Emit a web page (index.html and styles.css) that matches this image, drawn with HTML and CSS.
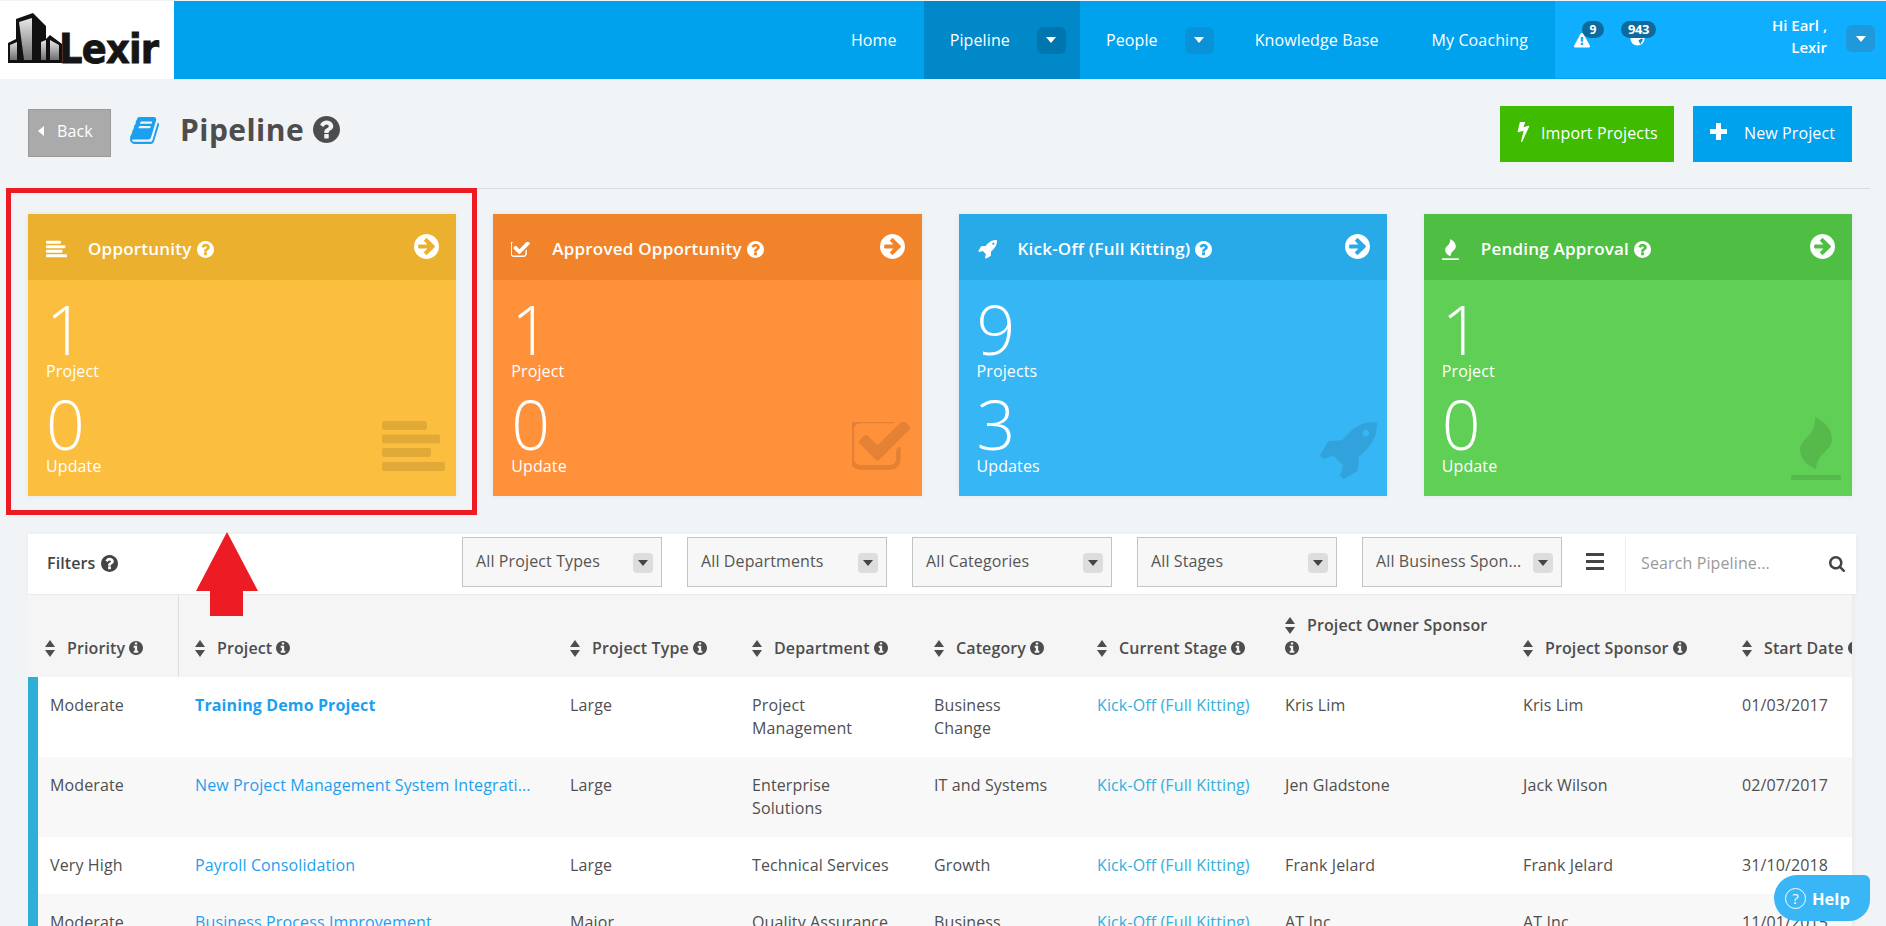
FILE: index.html
```html
<!DOCTYPE html>
<html lang="en">
<head>
<meta charset="utf-8">
<title>Pipeline</title>
<link rel="stylesheet" href="styles.css">
</head>
<body>
<svg class="defs" aria-hidden="true">
  <symbol id="q" viewBox="128 128 1536 1536"><path d="M1024 1376v-192q0-14-9-23t-23-9h-192q-14 0-23 9t-9 23v192q0 14 9 23t23 9h192q14 0 23-9t9-23zm256-672q0-88-55.5-163t-138.5-116-170-41q-243 0-371 213-15 24 8 42l132 100q7 6 19 6 16 0 25-12 53-68 86-92 34-24 86-24 48 0 85.5 26t37.5 59q0 38-20 61t-68 45q-63 28-115.5 86.5t-52.5 125.5v36q0 14 9 23t23 9h192q14 0 23-9t9-23q0-19 21.500-49.500t54.500-49.500q32-18 49-28.500t46-35 44.500-48 28-60.500 12.500-81zm384 192q0 209-103 385.500t-279.500 279.500-385.500 103-385.500-103-279.500-279.500-103-385.500 103-385.500 279.500-279.500 385.500-103 385.500 103 279.500 279.500 103 385.500z"/></symbol>
  <symbol id="info" viewBox="128 128 1536 1536"><path d="M1152 1376v-160q0-14-9-23t-23-9h-96v-512q0-14-9-23t-23-9h-320q-14 0-23 9t-9 23v160q0 14 9 23t23 9h96v320h-96q-14 0-23 9t-9 23v160q0 14 9 23t23 9h448q14 0 23-9t9-23zm-128-896v-160q0-14-9-23t-23-9h-192q-14 0-23 9t-9 23v160q0 14 9 23t23 9h192q14 0 23-9t9-23zm640 416q0 209-103 385.500t-279.500 279.500-385.500 103-385.500-103-279.500-279.500-103-385.500 103-385.500 279.500-279.500 385.500-103 385.500 103 279.500 279.500 103 385.500z"/></symbol>
  <symbol id="go" viewBox="128 128 1536 1536"><path d="M1413 896q0-27-18-45l-91-91-362-362q-18-18-45-18t-45 18l-91 91q-18 18-18 45t18 45l189 189h-502q-26 0-45 19t-19 45v128q0 26 19 45t45 19h502l-189 189q-19 19-19 45t19 45l91 91q18 18 45 18t45-18l362-362 91-91q18-18 18-45zm251 0q0 209-103 385.500t-279.500 279.500-385.500 103-385.500-103-279.500-279.500-103-385.500 103-385.500 279.500-279.500 385.500-103 385.500 103 279.500 279.500 103 385.500z"/></symbol>
  <symbol id="check" viewBox="128 256 1600 1280"><path d="M1472 930v318q0 119-84.500 203.500t-203.500 84.500h-832q-119 0-203.500-84.500t-84.500-203.500v-832q0-119 84.500-203.500t203.500-84.500h832q63 0 117 25 15 7 18 23 3 17-9 29l-49 49q-10 10-23 10-3 0-9-2-23-6-45-6h-832q-66 0-113 47t-47 113v832q0 66 47 113t113 47h832q66 0 113-47t47-113v-254q0-13 9-22l64-64q10-10 23-10 6 0 12 3 20 8 20 29zm231-489l-814 814q-24 24-57 24t-57-24l-430-430q-24-24-24-57t24-57l110-110q24-24 57-24t57 24l263 263 647-647q24-24 57-24t57 24l110 110q24 24 24 57t-24 57z"/></symbol>
  <symbol id="rocket" viewBox="64 128 1664 1664"><path d="M1504 448q0-40-28-68t-68-28-68 28-28 68 28 68 68 28 68-28 28-68zm224-288q0 249-75.500 430.500t-253.500 360.500q-81 80-195 176l-20 379q-2 16-16 26l-384 224q-7 4-16 4-12 0-23-9l-64-64q-13-14-8-32l85-276-281-281-276 85q-3 1-9 1-14 0-23-9l-64-64q-17-19-5-39l224-384q10-14 26-16l379-20q96-114 176-195 188-187 358-258t431-71q14 0 24 9.500t10 22.500z"/></symbol>
  <symbol id="fire" viewBox="0 0 50 63"><path d="M24 0C34 5 41 12 41 22 41 34 26 36 25 52 14 48 9 40 9 32 9 22 26 18 24 0Z"/><rect y="58" width="50" height="5"/></symbol>
  <symbol id="bars" viewBox="0 0 63 50"><rect width="45" height="9" rx="2"/><rect y="13.500" width="58" height="9" rx="2"/><rect y="27" width="49" height="9" rx="2"/><rect y="41" width="63" height="9" rx="2"/></symbol>
  <symbol id="bolt" viewBox="450 256 900 1536"><path d="M1333 566q18 20 7 44l-540 1157q-13 25-42 25-4 0-14-2-17-5-25.500-19t-4.500-30l197-808-406 101q-4 1-12 1-18 0-31-11-18-15-13-39l201-825q4-14 16-23t28-9h328q19 0 32 12.500t13 29.500q0 8-5 18l-171 463 396-98q8-2 12-2 19 0 34 15z"/></symbol>
  <symbol id="book" viewBox="64 128 1664 1536"><path d="M1703 478q40 57 18 129l-275 906q-19 64-76.500 107.500t-122.500 43.500h-923q-77 0-148.500-53.500t-99.500-131.500q-24-67-2-127 0-4 3-27t4-37q1-8-3-21.500t-3-19.500q2-11 8-21t16.500-23.500 16.500-23.500q23-38 45-91.500t30-91.500q3-10 .5-30t-.5-28q3-11 17-28t17-23q21-36 42-92t25-90q1-9-2.500-32t.5-28q4-13 22-30.500t22-22.500q19-26 42.500-84.500t27.500-96.500q1-8-3-25.500t-2-26.500q2-8 9-18t18-23 17-21q8-12 16.500-30.500t15-35 16-36 19.500-32 26.500-23.500 36-11.500 47.500 5.500l-1 3q38-9 51-9h761q74 0 114 56t18 130l-274 906q-36 119-71.500 153.500t-128.500 34.500h-869q-27 0-38 15-11 16-1 43 24 70 144 70h923q29 0 56-15.500t35-41.500l300-987q7-22 5-57 38 15 59 43zm-1064 2q-4 13 2 22.500t20 9.500h608q13 0 25.500-9.500t16.500-22.500l21-64q4-13-2-22.500t-20-9.500h-608q-13 0-25.500 9.500t-16.500 22.500zm-83 256q-4 13 2 22.500t20 9.500h608q13 0 25.500-9.500t16.500-22.500l21-64q4-13-2-22.500t-20-9.500h-608q-13 0-25.500 9.500t-16.500 22.500z"/></symbol>
  <symbol id="warn" viewBox="0 64 1792 1664"><path d="M1024 1375v-190q0-14-9.500-23.500t-22.500-9.500h-192q-13 0-22.500 9.500t-9.500 23.500v190q0 14 9.500 23.500t22.500 9.500h192q13 0 22.500-9.500t9.500-23.500zm-2-374l18-459q0-12-10-19-13-11-24-11h-220q-11 0-24 11-10 7-10 21l17 457q0 10 10 16.500t24 6.500h185q14 0 23.500-6.500t10.500-16.500zm-14-934l768 1408q35 63-2 126-17 29-46.500 46t-63.500 17h-1536q-34 0-63.500-17t-46.500-46q-37-63-2-126l768-1408q17-31 47-49t65-18 65 18 47 49z"/></symbol>
  <symbol id="search" viewBox="64 128 1664 1664"><path d="M1216 832q0-185-131.500-316.500t-316.500-131.500-316.500 131.500-131.500 316.500 131.500 316.500 316.500 131.500 316.500-131.500 131.500-316.500zm512 832q0 52-38 90t-90 38q-54 0-90-38l-343-342q-179 124-399 124-143 0-273.500-55.500t-225-150-150-225-55.500-273.500 55.500-273.500 150-225 225-150 273.500-55.500 273.500 55.500 225 150 150 225 55.500 273.500q0 220-124 399l343 343q37 37 37 90z"/></symbol>
  <symbol id="sort" viewBox="0 0 10 17"><path d="M5 0l5 7H0zM5 17L0 10h10z"/></symbol>
</svg>

<nav class="topnav">
  <a class="logo">
    <svg class="logo-mark" viewBox="0 0 54 50">
      <defs><linearGradient id="glass" x1="0" y1="0" x2="0" y2="1"><stop offset="0" stop-color="#e8e8e8"/><stop offset="1" stop-color="#6f6f6f"/></linearGradient></defs>
      <path d="M0 30L8 26V6L25 0 38 13V26L42 22 54 31V50H0Z" fill="#111"/>
      <path d="M11 9L24 5V47H16Z" fill="url(#glass)"/>
      <path d="M2 32L9 29V47H2ZM33 29L38 27V47H33ZM42 27L51 32V47H42Z" fill="url(#glass)"/>
    </svg>
    <span class="logo-word">Lexir</span>
  </a>
  <div class="nav-main">
    <a class="nav-item">Home</a>
    <a class="nav-item active">Pipeline<span class="drop"></span></a>
    <a class="nav-item">People<span class="drop"></span></a>
    <a class="nav-item">Knowledge Base</a>
    <a class="nav-item">My Coaching</a>
  </div>
  <div class="nav-user">
    <span class="alert alert-warn"><svg class="alert-icon"><use href="#warn"/></svg><b class="badge">9</b></span>
    <span class="alert alert-globe">
      <svg class="alert-icon" viewBox="0 0 16 16"><circle cx="8" cy="8" r="7.500" fill="#fff"/><path d="M3 3l5-1 3 2-2 3-3-1zM9 10l3-2 2 1-3 5z" fill="#0e8fd0"/></svg>
      <b class="badge">943</b>
    </span>
    <span class="hello">Hi Earl ,<br>Lexir</span>
    <span class="drop user-drop"></span>
  </div>
</nav>

<header class="page-head">
  <div class="head-left">
    <a class="back"><i class="back-tri"></i>Back</a>
    <svg class="book"><use href="#book"/></svg>
    <h1>Pipeline</h1>
    <svg class="title-help"><use href="#q"/></svg>
  </div>
  <div class="head-right">
    <a class="btn btn-green"><svg class="btn-bolt"><use href="#bolt"/></svg>Import Projects</a>
    <a class="btn btn-blue"><i class="btn-plus"></i>New Project</a>
  </div>
</header>

<section class="cards">
  <article class="card yellow">
    <div class="card-head">
      <svg class="ci"><use href="#bars"/></svg>
      <h2>Opportunity</h2><svg class="ch"><use href="#q"/></svg>
      <svg class="go"><use href="#go"/></svg>
    </div>
    <div class="card-body">
      <div class="num">1</div><div class="lbl">Project</div>
      <div class="num second">0</div><div class="lbl">Update</div>
      <svg class="wm wm-bars"><use href="#bars"/></svg>
    </div>
  </article>
  <article class="card orange">
    <div class="card-head">
      <svg class="ci"><use href="#check"/></svg>
      <h2>Approved Opportunity</h2><svg class="ch"><use href="#q"/></svg>
      <svg class="go"><use href="#go"/></svg>
    </div>
    <div class="card-body">
      <div class="num">1</div><div class="lbl">Project</div>
      <div class="num second">0</div><div class="lbl">Update</div>
      <svg class="wm wm-check"><use href="#check"/></svg>
    </div>
  </article>
  <article class="card blue">
    <div class="card-head">
      <svg class="ci"><use href="#rocket"/></svg>
      <h2>Kick-Off (Full Kitting)</h2><svg class="ch"><use href="#q"/></svg>
      <svg class="go"><use href="#go"/></svg>
    </div>
    <div class="card-body">
      <div class="num">9</div><div class="lbl">Projects</div>
      <div class="num second">3</div><div class="lbl">Updates</div>
      <svg class="wm wm-rocket"><use href="#rocket"/></svg>
    </div>
  </article>
  <article class="card green">
    <div class="card-head">
      <svg class="ci"><use href="#fire"/></svg>
      <h2>Pending Approval</h2><svg class="ch"><use href="#q"/></svg>
      <svg class="go"><use href="#go"/></svg>
    </div>
    <div class="card-body">
      <div class="num">1</div><div class="lbl">Project</div>
      <div class="num second">0</div><div class="lbl">Update</div>
      <svg class="wm wm-fire"><use href="#fire"/></svg>
    </div>
  </article>
</section>

<section class="filters">
  <div class="filters-title">Filters<svg class="fh"><use href="#q"/></svg></div>
  <div class="select">All Project Types<i class="sel-btn"></i></div>
  <div class="select">All Departments<i class="sel-btn"></i></div>
  <div class="select">All Categories<i class="sel-btn"></i></div>
  <div class="select">All Stages<i class="sel-btn"></i></div>
  <div class="select">All Business Spon...<i class="sel-btn"></i></div>
  <div class="burger"><i></i><i></i><i></i></div>
  <div class="search"><span>Search Pipeline...</span><svg class="search-icon"><use href="#search"/></svg></div>
</section>

<div class="table-wrap">
<table class="grid">
  <colgroup>
    <col class="c1"><col class="c2"><col class="c3"><col class="c4"><col class="c5"><col class="c6"><col class="c7"><col class="c8"><col class="c9">
  </colgroup>
  <thead>
    <tr>
      <th class="th-first"><svg class="srt"><use href="#sort"/></svg>Priority<svg class="inf"><use href="#info"/></svg></th>
      <th><svg class="srt"><use href="#sort"/></svg>Project<svg class="inf"><use href="#info"/></svg></th>
      <th><svg class="srt"><use href="#sort"/></svg>Project Type<svg class="inf"><use href="#info"/></svg></th>
      <th><svg class="srt"><use href="#sort"/></svg>Department<svg class="inf"><use href="#info"/></svg></th>
      <th><svg class="srt"><use href="#sort"/></svg>Category<svg class="inf"><use href="#info"/></svg></th>
      <th><svg class="srt"><use href="#sort"/></svg>Current Stage<svg class="inf"><use href="#info"/></svg></th>
      <th><svg class="srt"><use href="#sort"/></svg>Project Owner Sponsor<br><svg class="inf inf-alone"><use href="#info"/></svg></th>
      <th><svg class="srt"><use href="#sort"/></svg>Project Sponsor<svg class="inf"><use href="#info"/></svg></th>
      <th><svg class="srt"><use href="#sort"/></svg>Start Date<svg class="inf"><use href="#info"/></svg></th>
    </tr>
  </thead>
  <tbody>
    <tr>
      <td>Moderate</td><td><a class="lnk strong">Training Demo Project</a></td><td>Large</td><td>Project Management</td><td>Business Change</td><td><a class="stage">Kick-Off (Full Kitting)</a></td><td>Kris Lim</td><td>Kris Lim</td><td>01/03/2017</td>
    </tr>
    <tr>
      <td>Moderate</td><td><a class="lnk">New Project Management System Integrati...</a></td><td>Large</td><td>Enterprise Solutions</td><td>IT and Systems</td><td><a class="stage">Kick-Off (Full Kitting)</a></td><td>Jen Gladstone</td><td>Jack Wilson</td><td>02/07/2017</td>
    </tr>
    <tr>
      <td>Very High</td><td><a class="lnk">Payroll Consolidation</a></td><td>Large</td><td>Technical Services</td><td>Growth</td><td><a class="stage">Kick-Off (Full Kitting)</a></td><td>Frank Jelard</td><td>Frank Jelard</td><td>31/10/2018</td>
    </tr>
    <tr>
      <td>Moderate</td><td><a class="lnk">Business Process Improvement</a></td><td>Major</td><td>Quality Assurance</td><td>Business Change</td><td><a class="stage">Kick-Off (Full Kitting)</a></td><td>AT Inc</td><td>AT Inc</td><td>11/01/2015</td>
    </tr>
  </tbody>
</table>
</div>

<div class="red-box"></div>
<svg class="red-arrow" viewBox="0 0 62 84"><path d="M31 0L62 59H47V84H14V59H0z"/></svg>

<a class="help"><span class="help-q">?</span>Help</a>
</body>
</html>
```
FILE: styles.css
```css
* { box-sizing: border-box; }
html, body { margin: 0; height: 926px; overflow: hidden; }
body {
  background: #f1f4f7;
  font-family: "Open Sans", sans-serif;
  font-size: 16px;
  letter-spacing: 0.12px;
  color: #4d4d4d;
  position: relative;
  padding-top: 1px;
}
.defs { display: none; }
svg { fill: currentColor; display: block; flex: none; }

/* top nav */
.topnav { display: flex; height: 78px; background: #00a2ee; color: #fff; }
.logo { width: 174px; background: #fff; display: flex; align-items: flex-end; padding: 0 0 12px 8px; overflow: hidden; }
.logo-mark { width: 54px; height: 50px; margin-bottom: 4px; }
.logo-word {
  font-family: "DejaVu Sans Condensed", "DejaVu Sans", sans-serif;
  font-stretch: condensed;
  font-weight: 700;
  font-size: 41px;
  line-height: 36px;
  color: #151515;
  letter-spacing: -0.8px;
  margin-left: -3px;
  -webkit-text-stroke: 0.8px #151515;
}
.nav-main { flex: 1; display: flex; justify-content: flex-end; }
.nav-item { display: flex; align-items: center; padding: 0 27px 0 26px; font-size: 16px; }
.nav-item.active { background: #0088c8; padding-right: 14px; }
.nav-item .drop { margin-left: 27px; }
.nav-item:nth-child(3) { padding-right: 14px; }
.nav-item:nth-child(3) .drop { background: #0a92d8; }
.nav-item:nth-child(4) { padding-left: 27px; }
.nav-item:nth-child(5) { padding-right: 27px; padding-left: 26px; }
.drop {
  width: 29px; height: 27px; border-radius: 6px;
  background: #0076b0;
  display: inline-flex; align-items: center; justify-content: center;
}
.drop::after {
  content: "";
  border-left: 5px solid transparent;
  border-right: 5px solid transparent;
  border-top: 6px solid #fff;
}
.nav-user { width: 331px; background: #10aeff; display: flex; position: relative; border-bottom: 1px solid #00a2ee; }
.alert { position: absolute; display: block; }
.alert-warn { left: 18px; top: 32px; }
.alert-globe { left: 75px; top: 30px; }
.alert-icon { width: 18px; height: 15px; }
.alert-globe .alert-icon { width: 15px; height: 15px; }
.badge {
  position: absolute; top: -12px; left: 9px;
  min-width: 22px; height: 17px; padding: 0 7px;
  border-radius: 9px;
  background: #0e6a9c;
  color: #fff; font-size: 12px; font-weight: 700; line-height: 17px; text-align: center;
  letter-spacing: 0;
}
.alert-globe .badge { left: -9px; top: -10px; font-size: 13px; letter-spacing: -0.4px; }
.hello {
  margin: 13px 0 0 auto;
  text-align: right;
  font-size: 15px;
  font-weight: 600;
  line-height: 22px;
  letter-spacing: 0;
}
.user-drop { margin: 24px 11px 0 19px; background: #2099dc; }

/* page head */
.page-head {
  margin: 0 16px 0 12px;
  padding: 27px 18px 0 16px;
  height: 110px;
  border-bottom: 1px solid #d5dde5;
  display: flex;
  justify-content: space-between;
  align-items: flex-start;
}
.head-left { display: flex; align-items: center; margin-top: 3px; }
.back {
  width: 83px; height: 48px;
  background: #aaa; border: 1px solid #999;
  color: #fff; font-size: 16px;
  display: flex; align-items: center;
  padding: 0 0 4px 9px;
}
.back-tri {
  border-top: 5px solid transparent; border-bottom: 5px solid transparent;
  border-right: 6px solid #fff;
  margin-right: 13px;
}
.book { width: 29px; height: 27px; color: #1d9ff0; margin: -5px 0 0 19px; }
h1 { margin: -8px 0 0 21px; font-size: 30px; font-weight: 700; line-height: 41px; color: #4d4d4d; letter-spacing: 0.45px; }
.title-help { width: 27px; height: 27px; margin: -7px 0 0 9px; }
.head-right { display: flex; gap: 19px; }
.btn { height: 56px; display: flex; align-items: center; color: #fff; font-size: 16px; padding-bottom: 2px; }
.btn-green { width: 174px; background: #3fbc00; padding-left: 17px; }
.btn-blue { width: 159px; background: #00a2ee; padding-left: 17px; }
.btn-bolt { width: 13px; height: 20px; margin-right: 11px; margin-top: -2px; }
.btn-plus { width: 17px; height: 17px; margin-right: 17px; margin-top: -4px; background:
  linear-gradient(#fff,#fff) center/100% 5px no-repeat,
  linear-gradient(#fff,#fff) center/5px 100% no-repeat; }

/* cards */
.cards {
  display: grid;
  grid-template-columns: repeat(4, 1fr);
  gap: 37px;
  margin: 25px 34px 0 28px;
}
.card { height: 282px; color: #fff; display: flex; flex-direction: column; box-shadow: 0 0 6px rgba(0,0,0,.06); }
.card-head { height: 66px; display: flex; align-items: center; padding: 4px 18px 0 18px; position: relative; }
.card-head h2 { margin: 0; font-size: 17px; font-weight: 600; line-height: 24px; letter-spacing: 0.22px; }
.ci { width: 21px; height: 18px; margin-right: 21px; }
.orange .ci { width: 19px; height: 15px; margin-right: 22px; }
.blue .ci { width: 19px; height: 19px; margin-left: 1px; }
.green .ci { width: 17px; height: 21px; margin-right: 22px; }
.ch { width: 17px; height: 17px; margin-left: 5px; }
.go { width: 25px; height: 25px; position: absolute; right: 17px; top: 20px; }
.card-body { flex: 1; position: relative; padding: 13px 0 0 18px; }
.num { font-size: 68px; font-weight: 300; line-height: 62px; height: 62px; margin-top: 5px; letter-spacing: 0; }
.lbl { font-size: 16px; line-height: 22px; }
.num.second { margin-top: 11px; }
.wm { position: absolute; color: rgba(0,0,0,.105); }
.wm-bars { left: 354px; top: 141px; width: 63px; height: 50px; }
.wm-check { left: 359px; top: 142px; width: 58px; height: 49px; }
.wm-rocket { left: 360px; top: 142px; width: 58px; height: 58px; }
.wm-fire { left: 367px; top: 137px; width: 50px; height: 63px; }

.yellow .card-head { background: #ebb02e; }
.yellow .card-body { background: #fbbe3f; }
.orange .card-head { background: #f1832b; }
.orange .card-body { background: #ff913b; }
.blue .card-head { background: #28a9e8; }
.blue .card-body { background: #37b6f5; }
.green .card-head { background: #4fbf44; }
.green .card-body { background: #60cf56; }

/* filters */
.filters {
  margin: 38px 30px 0 28px;
  height: 61px;
  background: #fff;
  border-bottom: 1px solid #ececec;
  display: flex;
  align-items: flex-start;
  padding: 3px 0 0 19px;
  box-shadow: 0 0 4px rgba(0,0,0,.05);
}
.filters-title {
  width: 415px; height: 50px;
  padding-top: 2px;
  display: flex; align-items: center;
  font-weight: 600; color: #444; font-size: 16px;
}
.fh { width: 17px; height: 17px; margin-left: 5px; }
.select {
  width: 200px; height: 50px;
  margin-right: 25px;
  background: #f7f7f7;
  border: 1px solid #c4c4c4;
  padding: 0 8px 2px 13px;
  display: flex; align-items: center; justify-content: space-between;
  white-space: nowrap;
  font-size: 16px; color: #555;
}
.sel-btn {
  width: 20px; height: 20px; margin-top: 3px;
  background: #ddd; border-radius: 4px;
  display: flex; align-items: center; justify-content: center;
}
.sel-btn::after {
  content: "";
  border-left: 5px solid transparent;
  border-right: 5px solid transparent;
  border-top: 6px solid #444;
}
.burger { width: 18px; margin: 16px 0 0 -1px; display: flex; flex-direction: column; gap: 4px; }
.burger i { height: 3px; background: #444; display: block; }
.search {
  margin-left: 21px;
  width: 230px; height: 55px;
  border-left: 1px solid #eee;
  display: flex; align-items: center; justify-content: space-between;
  padding: 0 10px 3px 15px;
  color: #9a9a9a;
}
.search-icon { width: 16px; height: 16px; color: #444; margin-top: 2px; }

/* table */
.table-wrap { margin: 0 34px 0 28px; height: 331px; overflow: hidden; box-shadow: 2px 0 4px rgba(0,0,0,.04); }
.grid { table-layout: fixed; width: 1898px; border-collapse: separate; border-spacing: 0; }
.c1 { width: 151px; } .c2 { width: 375px; } .c3 { width: 182px; } .c4 { width: 182px; }
.c5 { width: 163px; } .c6 { width: 188px; } .c7 { width: 238px; } .c8 { width: 219px; } .c9 { width: 200px; }
th {
  background: #f5f5f5;
  height: 82px;
  padding: 12px 8px 17px 16px;
  text-align: left;
  vertical-align: bottom;
  font-weight: 600;
  font-size: 16px;
  line-height: 23px;
  color: #4d4d4d;
  white-space: nowrap;
}
.th-first { border-right: 1px solid #ddd; padding-left: 17px; }
.srt { display: inline-block; width: 10px; height: 17px; vertical-align: -3px; margin-right: 12px; }
.inf { display: inline-block; width: 14px; height: 14px; vertical-align: -1px; margin-left: 4px; }
.inf-alone { margin-left: 0; }
td {
  padding: 17px 20px 17px 16px;
  vertical-align: top;
  font-size: 16px;
  line-height: 23px;
  color: #4f4f4f;
  background: #fff;
}
tbody tr:nth-child(even) td { background: #f8f8f8; }
td:first-child { border-left: 10px solid #2eafd8; padding-left: 12px; }
td:nth-child(2) { white-space: nowrap; padding-right: 4px; }
td:nth-child(5) { padding-right: 30px; }
.lnk { color: #1d9ff0; }
.lnk.strong { font-weight: 700; }
.stage { color: #35aedc; white-space: nowrap; }

/* overlays */
.red-box { position: absolute; left: 6px; top: 188px; width: 471px; height: 327px; border: 5px solid #ed1c24; pointer-events: none; }
.red-arrow { position: absolute; left: 196px; top: 532px; width: 62px; height: 84px; fill: #ed1c24; }
.help {
  position: fixed; left: 1774px; top: 875px;
  width: 96px; height: 46px;
  background: #38b6f5;
  border-radius: 24px 6px 22px 24px;
  color: #fff; font-weight: 700; font-size: 16.500px; letter-spacing: 0;
  display: flex; align-items: center; padding-left: 11px; gap: 6px;
}
.help-q {
  width: 21px; height: 21px; border: 1.500px solid #fff; border-radius: 50%;
  font-size: 15px; font-weight: 400; line-height: 18px; text-align: center;
}
```
